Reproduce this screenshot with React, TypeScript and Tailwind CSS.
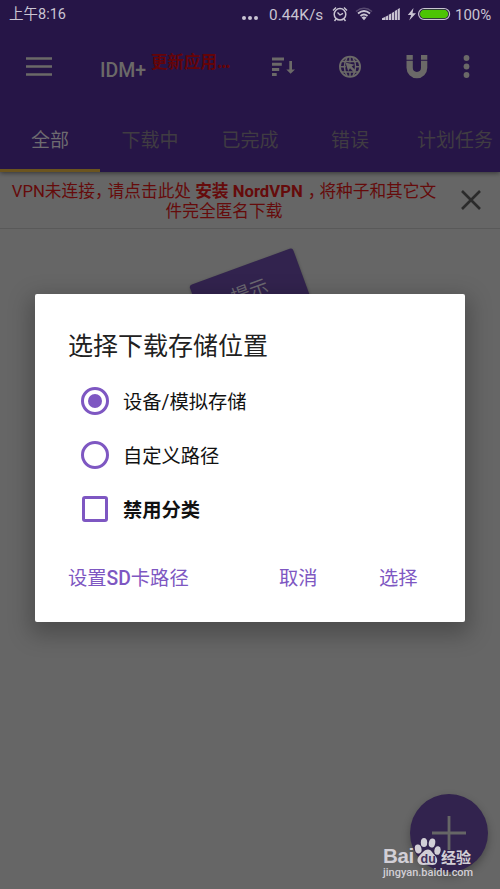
import type { ReactNode } from "react";

const tabs = [
  { label: "全部", active: true },
  { label: "下载中", active: false },
  { label: "已完成", active: false },
  { label: "错误", active: false },
];

const StatusBar = () => (
  <div className="flex h-7 items-center pl-[9px] font-['Roboto','Noto_Sans_CJK_SC',sans-serif] text-[15px] leading-7 whitespace-nowrap text-[#c9c4d2]">
    <span className="w-[233px] pt-[2px] text-[14.5px]">上午8:16</span>
    <svg width="16" height="28" fill="currentColor">
      <circle cx="2" cy="18" r="2" />
      <circle cx="8" cy="18" r="2" />
      <circle cx="14" cy="18" r="2" />
    </svg>
    <span className="ml-[11px] w-[56px] pt-px text-[15.3px] tracking-[0.1px]">0.44K/s</span>
    <svg className="ml-[7px]" width="16" height="28" fill="none" stroke="currentColor">
      <circle cx="8" cy="14.3" r="5.8" strokeWidth="1.5" />
      <path d="M5.5 12.5 8 15l3-1.7M1 10.5 4 7.5M15 10.5l-3-3M4 19l-1.5 2M12 19l1.5 2" strokeWidth="1.4" />
    </svg>
    <svg className="ml-[7px]" width="18" height="28" fill="none" stroke="currentColor">
      <path d="M1 11.5Q9 5 17 11.5" strokeWidth="1.6" opacity=".3" />
      <path d="M3 13.5Q9 8.5 15 13.5" strokeWidth="1.8" />
      <path d="M5.5 16Q9 13 12.5 16" strokeWidth="1.8" />
      <path d="m6.5 17.5 2.5 2.7 2.5-2.7Q9 15.5 6.5 17.5Z" fill="currentColor" stroke="none" />
    </svg>
    <svg className="ml-[9px]" width="18" height="28" fill="currentColor">
      <path d="M0 18.3 3 17v3H0zM3.4 16.7 6 15.4V20H3.4zM6.7 14.7l2.4-1.2V20H6.7zM9.8 12.9l2.3-1.2V20H9.8zM12.8 10.9l2.2-1.2V20h-2.2zM15.6 9.2 17.8 8v12h-2.2z" />
    </svg>
    <svg className="ml-[7px]" width="10" height="28" fill="currentColor">
      <path d="M6.5 8 .8 15h3.4l-2 5.5L9 13.3H5.5z" />
    </svg>
    <svg width="34" height="28">
      <rect x="1.6" y="8.5" width="31" height="11" rx="5.5" fill="none" stroke="currentColor" strokeWidth="1.2" />
      <rect x="3" y="9.7" width="28.2" height="8.6" rx="4.3" fill="#4cc404" />
    </svg>
    <span className="ml-[4px] pt-px text-[15px]">100%</span>
  </div>
);

const Toolbar = () => (
  <div className="flex h-[78px] items-center text-[#6b6968]">
    <svg className="ml-[26px]" width="26" height="24" fill="none" stroke="currentColor" strokeWidth="2.6">
      <path d="M0 3.5h26M0 11.5h26M0 19.5h26" />
    </svg>
    <div className="ml-[48px] w-[51px] pt-2 font-['Roboto',sans-serif] text-[19.5px] font-medium">
      IDM+
    </div>
    <div className="-mt-3 w-[121px] font-['Noto_Sans_CJK_SC',sans-serif] text-[16.5px] leading-6 font-bold whitespace-nowrap text-[#650408]">
      更新应用<span className="tracking-[-1.2px]">...</span>
    </div>
    <svg width="24" height="24" fill="currentColor">
      <path d="M0 2.5h12v3H0zM0 7.7h9.8v3H0zM0 13h7.2v3H0zM0 18h4.7v3H0zM17.3 6H20v8.500h3L18.600 18.800l-4.300-4.300h3z" />
    </svg>
    <svg className="ml-[43px]" width="23" height="24" fill="none" stroke="currentColor" strokeWidth="1.8">
      <circle cx="11" cy="11.8" r="10.1" />
      <path d="M11 1.5v6M11 17v5M.7 11.8h6M16 11.8h5.300M2.700 6.500h16.600M2.700 17.100h16.600" strokeWidth="1.5" />
      <path d="M8 3Q5.400 7 5.400 11.800T8 20.600M14 3q2.600 4 2.600 8.800T14 20.600" strokeWidth="1.5" />
      <path d="m6.500 7.500 9 2.300-2.800 1.800 3.800 3.600-1.800 1.800-3.700-3.700-1.800 3z" fill="currentColor" stroke="none" />
    </svg>
    <svg className="ml-[44px]" width="22" height="24" fill="currentColor">
      <path d="M.5 0h6.300v4.700H.5zM15 0h6.300v4.700H15zM.5 5.800h6.300v7a4.100 4.100 0 0 0 8.200 0v-7h6.300v7a10.400 10.400 0 0 1-20.800 0z" />
    </svg>
    <svg className="ml-[35px]" width="8" height="24" fill="currentColor">
      <circle cx="3.500" cy="3" r="2.900" />
      <circle cx="3.500" cy="11.500" r="2.900" />
      <circle cx="3.500" cy="20" r="2.900" />
    </svg>
  </div>
);

const Option = ({ icon, children }: { icon: ReactNode; children: ReactNode }) => (
  <div className="flex h-[54px] items-center text-[19.3px] text-[#111]">
    <div className="flex w-[55px] pl-[13px]">{icon}</div>
    <span className="pt-[4px]">{children}</span>
  </div>
);

const Dialog = () => (
  <div className="absolute top-[294px] left-[35px] h-[328px] w-[430px] rounded-[2px] bg-white px-[33px] pt-[35px] shadow-[0_8px_22px_5px_rgba(0,0,0,0.25)]">
    <h2 className="h-[45px] text-[25px] leading-[36px] text-[#212121]">选择下载存储位置</h2>
    <Option
      icon={
        <div className="flex size-7 items-center justify-center rounded-full border-3 border-[#7e57c2]">
          <div className="size-[14px] rounded-full bg-[#7e57c2]" />
        </div>
      }
    >
      设备/模拟存储
    </Option>
    <Option icon={<div className="size-7 rounded-full border-3 border-[#7e57c2]" />}>
      自定义路径
    </Option>
    <Option
      icon={<div className="ml-px size-[26px] rounded-[3px] border-3 border-[#7e57c2]" />}
    >
      <b>禁用分类</b>
    </Option>
    <div className="mt-[29px] flex text-[19.3px] leading-[28px] text-[#7e57c2]">
      <button className="w-[211px] text-left">
        设置<span className="font-medium">SD</span>卡路径
      </button>
      <button className="w-[100px] text-left">取消</button>
      <button>选择</button>
    </div>
  </div>
);

const Watermark = () => (
  <div className="absolute top-[839px] left-[383px] w-[92px] text-[#d2cfd6]">
    <div className="flex h-7 items-center">
      <span className="w-[31px] pt-[6px] font-['Liberation_Sans',sans-serif] text-[20.5px] leading-8 font-bold tracking-[-0.3px]">
        Bai
      </span>
      <svg width="27" height="32" viewBox="0 0 27 32" className="-mt-1.5 shrink-0" fill="currentColor">
        <ellipse cx="4.2" cy="15" rx="3.3" ry="4.5" transform="rotate(-12 4.2 15)" />
        <ellipse cx="10" cy="8.5" rx="3.2" ry="4.6" />
        <ellipse cx="18" cy="9" rx="3.2" ry="4.6" transform="rotate(12 18 9)" />
        <ellipse cx="23.5" cy="16.5" rx="3.1" ry="4.3" transform="rotate(12 23.5 16.5)" />
        <path d="M14 15.500c3 0 4 3 6.500 5.500 5 5 2.500 10.500-2.500 10-3-.500-5-.500-8 0-6 .500-9-5-4-10 3-2.500 4.500-5.500 8-5.500z" />
        <text x="6.5" y="29" fontSize="12.5" fontWeight="bold" fill="#40315b" fontFamily="Liberation Sans, sans-serif">
          du
        </text>
      </svg>
      <span className="pt-[7px] font-['Noto_Sans_CJK_SC',sans-serif] text-[15px] leading-8 font-bold whitespace-nowrap">
        经验
      </span>
    </div>
    <div className="-mt-[2px] font-['Roboto',sans-serif] text-[11px] leading-4 font-medium whitespace-nowrap">
      jingyan.baidu.com
    </div>
  </div>
);

const App = () => {
  return (
    <div className="relative h-[889px] w-[500px] overflow-hidden bg-[#666] font-['Roboto','Noto_Sans_CJK_SC',sans-serif]">
      <header className="relative h-[172px] bg-[#261547] shadow-[0_1px_5px_rgba(0,0,0,0.5)]">
        <StatusBar />
        <Toolbar />
        <nav className="flex h-[66px] text-[19px] leading-[70px] whitespace-nowrap">
          {tabs.map((tab) => (
            <div
              key={tab.label}
              className={
                tab.active
                  ? "w-[100px] border-b-[3px] border-[#6b541f] text-center text-[#6e6b70]"
                  : "w-[100px] text-center text-[#403c42]"
              }
            >
              {tab.label}
            </div>
          ))}
          <div className="pl-[17px] text-[#403c42]">计划任务</div>
        </nav>
      </header>

      <section className="flex h-[57px] items-center border-b border-[#595959]">
        <p className="w-[448px] pt-[4px] text-center text-[16.7px] leading-[20px] text-[#650b0b]">
          VPN未连接<span className="tracking-[-4px]">，</span>请点击此处 <b>安装 NordVPN</b>
          <span className="pl-[5px] tracking-[-5px]">，</span>将种子和其它文
          <br />
          件完全匿名下载
        </p>
        <svg className="ml-[13px]" width="20" height="20" fill="none" stroke="#2b2b2b" strokeWidth="2.6">
          <path d="m1 1 18 18M19 1 1 19" />
        </svg>
      </section>

      <div className="absolute top-[265px] left-[195px] flex h-[54px] w-[110px] -rotate-20 items-center justify-center rounded-[3px] bg-[#32234e] text-[19px] text-[#6b6871] shadow-[0_1px_3px_rgba(0,0,0,0.3)]">
        提示
      </div>

      <button className="absolute top-[794px] left-[410px] flex size-[78px] items-center justify-center rounded-full bg-[#32234e] shadow-[0_4px_8px_rgba(0,0,0,0.3)]">
        <svg width="34" height="34" fill="none" stroke="#666" strokeWidth="2.8">
          <path d="M17 0v34M0 17h34" />
        </svg>
      </button>

      <Dialog />
      <Watermark />
    </div>
  );
};

export default App;
